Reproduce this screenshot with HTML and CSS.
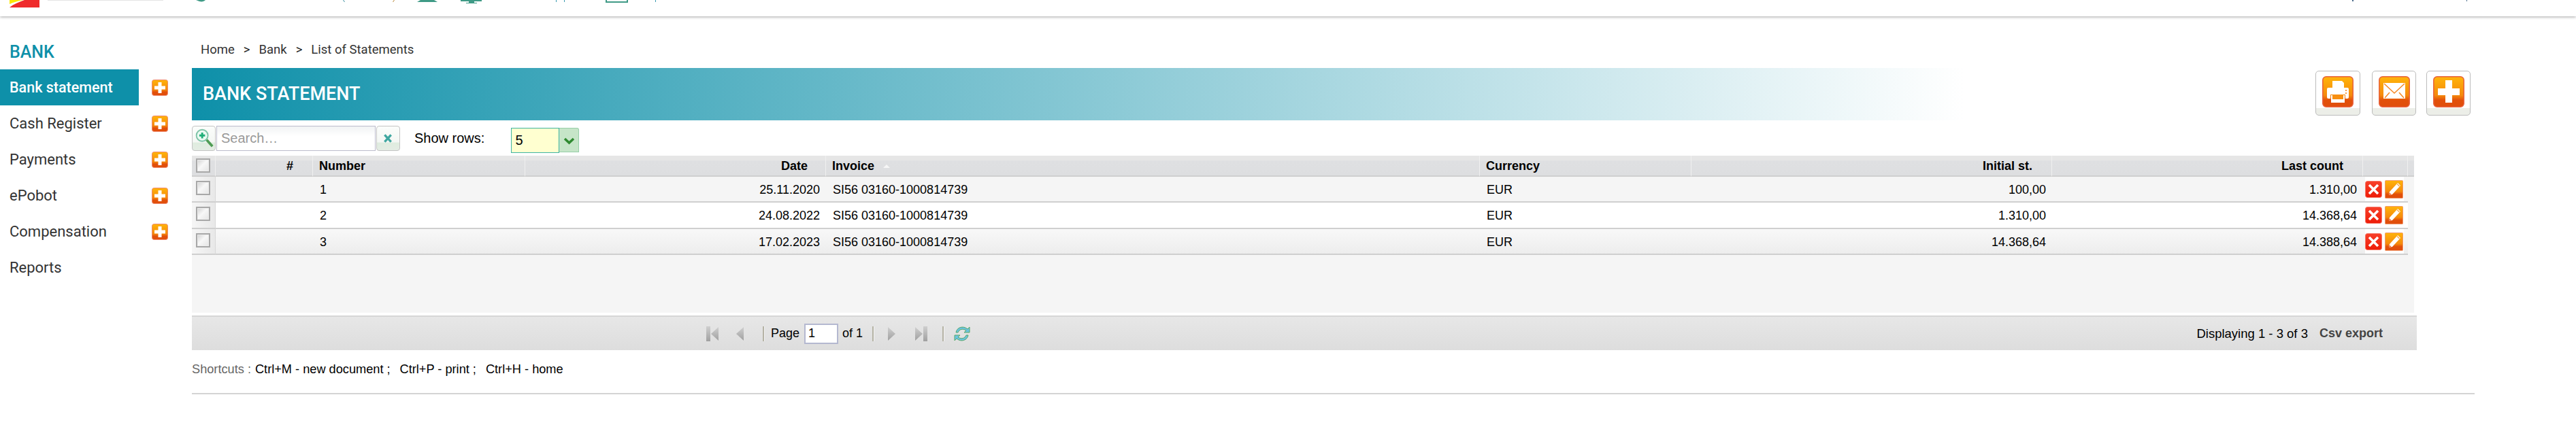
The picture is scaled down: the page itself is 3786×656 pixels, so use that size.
FILE: index.html
```html
<!DOCTYPE html>
<html lang="en">
<head>
<meta charset="utf-8">
<title>Bank statement</title>
<link rel="stylesheet" href="styles.css">
</head>
<body>
<svg class="defs" width="0" height="0" aria-hidden="true">
  <defs>
    <linearGradient id="org" x1="0" y1="0" x2="0" y2="1">
      <stop offset="0" stop-color="#ffb40a"/>
      <stop offset=".62" stop-color="#f58a0c"/>
      <stop offset=".78" stop-color="#e2500a"/>
      <stop offset="1" stop-color="#e04e0c"/>
    </linearGradient>
    <linearGradient id="red" x1="0" y1="0" x2="0" y2="1">
      <stop offset="0" stop-color="#f8402a"/>
      <stop offset="1" stop-color="#ee1c08"/>
    </linearGradient>
    <linearGradient id="pgray" x1="0" y1="0" x2="0" y2="1">
      <stop offset="0" stop-color="#cfcfcf"/>
      <stop offset="1" stop-color="#a0a0a0"/>
    </linearGradient>
    <symbol id="plus-sym" viewBox="0 0 24 24">
      <rect x=".5" y=".5" width="23" height="23" rx="3" fill="url(#org)" stroke="#ee8a70"/>
      <path d="M9.500 4H14.500V9.500H20V14.500H14.500V20H9.500V14.500H4V9.500H9.500Z" fill="#fff"/>
    </symbol>
    <symbol id="del-sym" viewBox="0 0 25 25">
      <rect x=".5" y=".5" width="24" height="24" rx="3" fill="url(#red)" stroke="#f57a6a"/>
      <path d="M6 6L19 19M19 6L6 19" stroke="#fff" stroke-width="3.600"/>
    </symbol>
    <symbol id="edit-sym" viewBox="0 0 27 27">
      <rect x=".5" y=".5" width="26" height="26" rx="1" fill="url(#org)" stroke="#f09a70"/>
      <path d="M19 4L23 8L11 21L6 22L7 17Z" fill="#fff"/>
      <path d="M18 5.500L21.500 9" stroke="#f5a040" stroke-width="1.200"/>
      <path d="M6 22L7 18.500L9.500 21Z" fill="#e8602a"/>
    </symbol>
  </defs>
</svg>

<header class="topbar">
  <svg class="top-left" width="1000" height="12" viewBox="0 0 1000 12" aria-hidden="true">
    <path d="M14 11C20 6 28 3 36 0H58V11Z" fill="#ef2b2b"/>
    <path d="M14 0H34C26 1.500 19 3.500 14 6Z" fill="#fbe806"/>
    <path d="M70 0H240V1H70Z" fill="#e4e4e4"/>
    <path d="M288 0H302C300 2 297 3 293 2Z" fill="#3f9a86"/>
    <path d="M504 0H505L507 3H506Z" fill="#3a8fa0"/>
    <path d="M579 0H580L578 3H577Z" fill="#b98a3a"/>
    <path d="M618 0H638L643 3H613Z" fill="#3f9a86"/>
    <path d="M677 0H708V2H697V4H701V5H685V4H689V2H677Z" fill="#3f9a86"/>
    <path d="M817 0H818V3H817ZM829 0H830V3H829Z" fill="#3a9ab0"/>
    <path d="M890 0H892V2H921V0H923V4H890Z" fill="#3f9a86"/>
    <path d="M963 0H964V3H963Z" fill="#3a9ab0"/>
  </svg>
  <svg class="top-right" width="170" height="4" viewBox="0 0 170 4" aria-hidden="true">
    <path d="M1 0H3V2H1ZM169 0H170V2H169Z" fill="#4a6a8a"/>
  </svg>
</header>

<div class="layout">
  <aside class="sidebar">
    <h2 class="side-title">BANK</h2>
    <ul class="menu">
      <li class="menu-row"><a class="menu-link active">Bank statement</a><svg class="plus"><use href="#plus-sym"/></svg></li>
      <li class="menu-row"><a class="menu-link">Cash Register</a><svg class="plus"><use href="#plus-sym"/></svg></li>
      <li class="menu-row"><a class="menu-link">Payments</a><svg class="plus"><use href="#plus-sym"/></svg></li>
      <li class="menu-row"><a class="menu-link">ePobot</a><svg class="plus"><use href="#plus-sym"/></svg></li>
      <li class="menu-row"><a class="menu-link">Compensation</a><svg class="plus"><use href="#plus-sym"/></svg></li>
      <li class="menu-row"><a class="menu-link">Reports</a></li>
    </ul>
  </aside>

  <main class="content">
    <nav class="crumbs"><span>Home</span><i>&gt;</i><span>Bank</span><i>&gt;</i><span>List of Statements</span></nav>

    <div class="title-row">
      <h1 class="banner">BANK STATEMENT</h1>
      <div class="actions">
        <button class="act act-print" aria-label="Print">
          <svg viewBox="0 0 46 46" class="act-ico">
            <rect x=".8" y=".8" width="44.400" height="44.400" rx="5" fill="url(#org)" stroke="#e8603c" stroke-width="1.500"/>
            <path d="M15 7H29L32 10V17H15Z" fill="#fff"/>
            <path d="M9 17H37Q39 17 39 19V31Q39 33 37 33H34V27H12V33H9Q7 33 7 31V19Q7 17 9 17Z" fill="#fff"/>
            <rect x="13" y="28" width="20" height="11" fill="#fff"/>
            <rect x="15" y="27" width="16" height="7" fill="#f78f10"/>
            <path d="M34 20H36V22H34ZM34 24H36V26H34Z" fill="#f79a40"/>
          </svg>
        </button>
        <button class="act act-mail" aria-label="Email">
          <svg viewBox="0 0 46 46" class="act-ico">
            <rect x=".8" y=".8" width="44.400" height="44.400" rx="5" fill="url(#org)" stroke="#e8603c" stroke-width="1.500"/>
            <rect x="7" y="10" width="32" height="23" fill="#fff"/>
            <path d="M8 11L23 25L38 11M9 32L16 24M37 32L30 24" fill="none" stroke="#f58a28" stroke-width="1.600"/>
          </svg>
        </button>
        <button class="act act-add" aria-label="Add">
          <svg viewBox="0 0 46 46" class="act-ico">
            <rect x=".8" y=".8" width="44.400" height="44.400" rx="5" fill="url(#org)" stroke="#e8603c" stroke-width="1.500"/>
            <path d="M18 6H28V18H39V28H28V39H18V28H7V18H18Z" fill="#fff"/>
          </svg>
        </button>
      </div>
    </div>

    <div class="toolbar">
      <button class="tool-btn" aria-label="Search">
        <svg viewBox="0 0 35 37" width="33" height="35">
          <circle cx="15" cy="14" r="9" fill="#eafaf2" stroke="#7fc4a8" stroke-width="2"/>
          <path d="M15 9.500V18.500M10.500 14H19.500" stroke="#1fae78" stroke-width="3"/>
          <path d="M22 21L31 31" stroke="#4f9c55" stroke-width="4"/>
        </svg>
      </button>
      <input class="search-input" type="text" placeholder="Search…">
      <button class="tool-btn" aria-label="Clear">
        <svg viewBox="0 0 35 37" width="33" height="35">
          <path d="M12 13L22 24M22 13L12 24" stroke="#3fa7a0" stroke-width="3.500"/>
        </svg>
      </button>
      <span class="rows-label">Show rows:</span>
      <div class="rows-select">
        <span class="rows-value">5</span>
        <span class="rows-arrow">
          <svg viewBox="0 0 29 36" width="29" height="36"><path d="M8 15L14.500 21L21 15" fill="none" stroke="#2f8a30" stroke-width="3.500"/></svg>
        </span>
      </div>
    </div>

    <div class="grid-wrap">
      <table class="grid">
        <colgroup>
          <col class="c-chk"><col class="c-idx"><col class="c-num"><col class="c-date"><col class="c-inv"><col class="c-cur"><col class="c-init"><col class="c-last"><col class="c-act"><col class="c-scroll">
        </colgroup>
        <thead>
          <tr>
            <th class="chk"><span class="cb"></span></th>
            <th class="r wide">#</th>
            <th class="l">Number</th>
            <th class="r date-h">Date</th>
            <th class="l">Invoice <span class="sort"></span></th>
            <th class="l">Currency</th>
            <th class="r wide">Initial st.</th>
            <th class="r wide">Last count</th>
            <th></th>
            <th></th>
          </tr>
        </thead>
        <tbody>
          <tr>
            <td class="chk"><span class="cb"></span></td><td></td><td class="l">1</td><td class="r">25.11.2020</td><td class="l">SI56 03160-1000814739</td><td class="l">EUR</td><td class="r">100,00</td><td class="r">1.310,00</td>
            <td class="ops"><span class="ops-box"><svg class="op-del"><use href="#del-sym"/></svg><svg class="op-edit"><use href="#edit-sym"/></svg></span></td><td class="scroll"></td>
          </tr>
          <tr>
            <td class="chk"><span class="cb"></span></td><td></td><td class="l">2</td><td class="r">24.08.2022</td><td class="l">SI56 03160-1000814739</td><td class="l">EUR</td><td class="r">1.310,00</td><td class="r">14.368,64</td>
            <td class="ops"><span class="ops-box"><svg class="op-del"><use href="#del-sym"/></svg><svg class="op-edit"><use href="#edit-sym"/></svg></span></td><td class="scroll"></td>
          </tr>
          <tr>
            <td class="chk"><span class="cb"></span></td><td></td><td class="l">3</td><td class="r">17.02.2023</td><td class="l">SI56 03160-1000814739</td><td class="l">EUR</td><td class="r">14.368,64</td><td class="r">14.388,64</td>
            <td class="ops"><span class="ops-box"><svg class="op-del"><use href="#del-sym"/></svg><svg class="op-edit"><use href="#edit-sym"/></svg></span></td><td class="scroll"></td>
          </tr>
        </tbody>
      </table>
    </div>

    <footer class="pager">
      <svg class="pg pg-first" viewBox="0 0 19 22"><rect x="0" y="0" width="6" height="22" fill="url(#pgray)"/><path d="M18 1V21L7 11Z" fill="url(#pgray)"/></svg>
      <svg class="pg pg-prev" viewBox="0 0 11 22"><path d="M11 1V21L0 11Z" fill="url(#pgray)"/></svg>
      <span class="pg-sep sep-a"></span>
      <span class="pg-text">Page</span>
      <input class="pg-input" type="text" value="1">
      <span class="pg-text">of 1</span>
      <span class="pg-sep sep-b"></span>
      <svg class="pg pg-next" viewBox="0 0 11 22"><path d="M0 1V21L11 11Z" fill="url(#pgray)"/></svg>
      <svg class="pg pg-last" viewBox="0 0 18 22"><path d="M0 1V21L11 11Z" fill="url(#pgray)"/><rect x="12" y="0" width="6" height="22" fill="url(#pgray)"/></svg>
      <span class="pg-sep sep-c"></span>
      <svg class="pg pg-refresh" viewBox="0 0 24 26">
        <path d="M3 11C4 4 13 0 20 6L23 3V11H15L18 8C13 5 8 6 6 11Z" fill="#6cc3df" stroke="#54a86a" stroke-width="1"/>
        <path d="M21 15C20 22 11 26 4 20L1 23V15H9L6 18C11 21 16 20 18 15Z" fill="#6cc3df" stroke="#54a86a" stroke-width="1"/>
      </svg>
      <span class="pg-info">Displaying 1 - 3 of 3</span>
      <span class="pg-csv">Csv export</span>
    </footer>

    <p class="shortcuts"><span class="sc-label">Shortcuts :</span><span class="sc-item">Ctrl+M - new document ;</span><span class="sc-item">Ctrl+P - print ;</span><span class="sc-item">Ctrl+H - home</span></p>
    <hr class="rule">
  </main>
</div>
</body>
</html>
```

FILE: styles.css
```css
* { box-sizing: border-box; }
html, body { margin: 0; padding: 0; background: #fff; }
body { font-family: "Liberation Sans", Arial, sans-serif; font-size: 18px; color: #000; }
.defs { position: absolute; }

.topbar {
  height: 24px;
  background: #fff;
  box-shadow: 0 1px 4px rgba(0, 0, 0, .35);
  display: flex;
  justify-content: space-between;
  align-items: flex-start;
  padding-right: 160px;
}
.top-left, .top-right { display: block; }

.layout { display: flex; align-items: flex-start; }

/* Sidebar */
.sidebar { flex: 0 0 282px; padding-top: 39px; font-family: Roboto, sans-serif; }
.side-title { margin: 0 0 11px; padding-left: 14px; font-size: 25px; line-height: 28px; font-weight: 500; color: #0e90a9; }
.menu { list-style: none; margin: 0; padding: 0; }
.menu-row { display: flex; align-items: center; height: 53px; }
.menu-link { flex: 0 0 204px; height: 53px; line-height: 53px; padding-left: 14px; font-size: 22px; color: #333; }
.menu-link.active { background: #0e90a9; color: #fff; font-weight: 500; font-size: 21.500px; }
.plus { width: 24px; height: 24px; margin-left: 19px; }

/* Main column */
.content { flex: 1; padding: 37px 149px 0 0; min-width: 0; }
.crumbs { display: flex; align-items: center; height: 24px; padding-left: 13px; font-family: Roboto, sans-serif; font-size: 18.500px; color: #333; }
.crumbs i { font-style: normal; margin: 0 13px; color: #222; }

.title-row { display: flex; height: 77px; margin-top: 15px; padding-right: 6px; }
.banner {
  flex: 0 0 2605px;
  margin: 0;
  padding: 0 0 0 16px;
  height: 77px;
  line-height: 77px;
  font-family: Roboto, sans-serif;
  font-size: 27px;
  font-weight: 500;
  color: #fff;
  background: linear-gradient(to right, #0e90a9 0%, #fff 100%);
}
.actions { display: flex; margin-left: auto; margin-top: 4px; }
.act {
  display: flex;
  align-items: flex-start;
  justify-content: center;
  padding: 7px 0 0;
  width: 65px;
  height: 66px;
  border: 1.500px solid #bcbcbc;
  border-radius: 5px;
  background: linear-gradient(to bottom, #fff 0%, #fff 84%, #eceee8 84%, #eceee8 100%);
}
.act-print { width: 66px; margin-right: 17px; }
.act-mail { margin-right: 15px; }
.act-ico { width: 46px; height: 46px; }

/* Toolbar */
.toolbar { display: flex; align-items: flex-start; height: 44px; margin-top: 8px; }
.tool-btn {
  display: flex;
  align-items: center;
  justify-content: center;
  width: 35px;
  height: 37px;
  padding: 0;
  border: 1.500px solid #c4c4c4;
  border-radius: 4px;
  background: linear-gradient(to bottom, #fbfdfb 0%, #f4f7f4 65%, #dfecdf 70%, #e4ece4 100%);
}
.search-input {
  width: 234px;
  height: 37px;
  margin: 0 1px;
  padding: 0 6px;
  border: 1.500px solid #bcbccc;
  background: linear-gradient(to bottom, #f1f3f4 0%, #fff 40%);
  font: 20px "Liberation Sans", Arial, sans-serif;
  color: #333;
  outline: none;
}
.search-input::placeholder { color: #999; opacity: 1; }
.rows-label { margin-left: 21px; font-size: 20px; line-height: 36px; }
.rows-select { display: flex; margin: 3px 0 0 39px; }
.rows-value {
  width: 71px;
  height: 37px;
  padding-left: 5px;
  line-height: 35px;
  font-size: 20px;
  border: 1.500px solid #3eb4a0;
  background: #ffffd0;
}
.rows-arrow { width: 29px; height: 36px; background: #c6e5c8; border: 1px solid #97cfa8; border-left: 0; border-radius: 0 3px 0 0; }
.rows-arrow svg { display: block; }

/* Grid */
.grid-wrap { width: 3266px; height: 231px; background: #f5f5f5; }
.grid { width: 100%; table-layout: fixed; border-collapse: separate; border-spacing: 0; font-size: 18px; }
.c-chk { width: 35px; }
.c-idx { width: 143px; }
.c-num { width: 312px; }
.c-date { width: 442px; }
.c-inv { width: 961px; }
.c-cur { width: 311px; }
.c-init { width: 530px; }
.c-last { width: 457px; }
.c-act { width: 66px; }
.c-scroll { width: 9px; }
.grid th, .grid td { padding: 0 9px; white-space: nowrap; overflow: hidden; }
.grid th {
  height: 31px;
  padding-top: 1px;
  font-weight: bold;
  background: linear-gradient(to bottom, #e6e6e6 0%, #e6e6e6 24%, #dfe0e2 26%, #dddee0 100%);
  border-right: 1px solid #f0f0f0;
  border-bottom: 2px solid #cfcfcf;
}
.grid th.r { text-align: right; }
.grid th.l { text-align: left; }
.grid th.wide { padding-right: 28px; }
.grid th.date-h { padding-right: 26px; }
.grid th:last-child { border-right: 0; }
.grid td { height: 38px; padding-top: 2px; border-bottom: 2px solid #cfcfcf; }
.grid td.r { text-align: right; }
.grid td.l { text-align: left; padding-left: 10px; }
.grid tbody tr:nth-child(2) td { height: 39px; background: #fff; }
.grid tbody tr:nth-child(3) td { background: linear-gradient(to bottom, #f8f8f8, #ededed); }
.grid tbody tr:nth-child(1) td { background: #f5f5f5; }
.grid th.chk, .grid td.chk { padding: 0; text-align: left; }
.grid th.chk { padding-left: 6px; }
.grid td.chk { padding-left: 6px; border-right: 1px solid #d8d8d8; background: linear-gradient(to right, #f6f6f6, #e8e8e8) !important; vertical-align: top; }
.grid td.chk .cb { margin-top: 6px; }
.grid tbody td.scroll { background: #f5f5f5 !important; border-bottom: 0; }
.cb {
  display: block;
  width: 21px;
  height: 21px;
  border: 2px solid #a8a8a8;
  background: linear-gradient(135deg, #d0d0d0 0%, #f8f8f8 45%, #e4e4e4 100%);
  box-shadow: inset 0 0 0 1px #eee;
}
.sort {
  display: inline-block;
  margin-left: 8px;
  vertical-align: 3px;
  width: 0;
  height: 0;
  border-left: 5px solid transparent;
  border-right: 5px solid transparent;
  border-bottom: 5px solid #f6f6f6;
}
.grid td.ops { padding: 0 0 0 3px; vertical-align: top; }
.ops-box { display: flex; align-items: center; width: 57px; height: 36px; background: #fff; gap: 4px; }
.op-del { width: 25px; height: 25px; }
.op-edit { width: 27px; height: 27px; }

/* Pager */
.pager {
  display: flex;
  align-items: center;
  width: 3270px;
  height: 51px;
  margin-top: 4px;
  padding: 0 50px 0 756px;
  border-top: 2px solid #d6d6d6;
  background: linear-gradient(to bottom, #e7e7e7, #dddddd);
  font-size: 18px;
}
.pg { display: block; flex: none; height: 22px; }
.pg-first { width: 19px; }
.pg-prev { width: 11px; margin-left: 25px; }
.pg-sep { flex: none; width: 2px; height: 22px; background: #b5b3a5; box-shadow: 1px 0 0 #f2f2f2; }
.sep-a { margin: 0 10px 0 28px; }
.sep-b { margin: 0 21px 0 14px; }
.sep-c { margin: 0 15px 0 22px; }
.pg-input {
  width: 50px;
  height: 30px;
  margin: 0 6px 0 7px;
  padding: 0 0 0 4px;
  border: 2px solid #b4b8d0;
  background: #fff;
  font: 18px "Liberation Sans", Arial, sans-serif;
  outline: none;
}
.pg-next { width: 11px; }
.pg-last { width: 18px; margin-left: 29px; }
.pg-refresh { width: 24px; height: 26px; }
.pg-info { margin-left: auto; font-size: 18.500px; }
.pg-csv { margin-left: 17px; font-weight: bold; color: #444; }

/* Footer */
.shortcuts { display: flex; height: 24px; line-height: 24px; margin: 16px 0 0; font-size: 18.200px; }
.sc-label { color: #666; margin-right: 6px; }
.sc-item { margin-right: 14px; }
.rule { height: 2px; margin: 23px 0 0; border: 0; background: #d4d4d4; }
```
